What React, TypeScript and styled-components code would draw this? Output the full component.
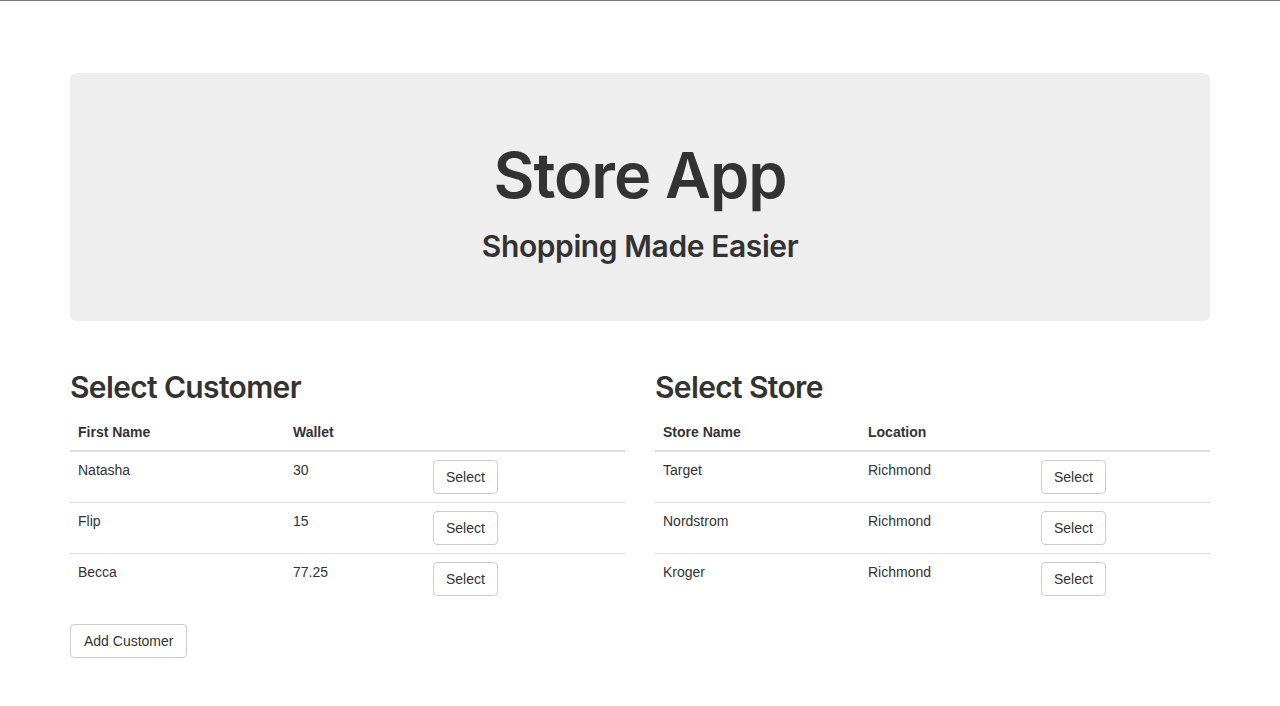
import React from "react";
import styled, { createGlobalStyle } from "styled-components";

const GlobalStyle = createGlobalStyle`
  * { box-sizing: border-box; }
  html, body { margin: 0; padding: 0; background: #fff; }
  body {
    border-top: 1px solid #777;
    font-family: "Liberation Sans", Helvetica, Arial, sans-serif;
    font-size: 14px;
    line-height: 1.42857143;
    color: #333;
  }
`;

const Container = styled.div`
  width: 1170px;
  margin: 0 auto;
  padding: 72px 15px 40px;
`;

const Jumbotron = styled.div`
  background: #eee;
  border-radius: 6px;
  padding: 48px 60px;
  margin-bottom: 30px;
  text-align: center;
`;

const headingFont = `"Inter", "Liberation Sans", Helvetica, Arial, sans-serif`;

const Title = styled.h1`
  font-family: ${headingFont};
  font-size: 63px;
  font-weight: 600;
  letter-spacing: -1px;
  line-height: 1.1;
  margin: 20px 0 10px;
  color: #333;
`;

const Subtitle = styled.h2`
  font-family: ${headingFont};
  font-size: 30px;
  font-weight: 600;
  letter-spacing: -0.4px;
  line-height: 1.1;
  margin: 20px 0 10px;
  color: #333;
`;

const Row = styled.div`
  display: grid;
  grid-template-columns: 1fr 1fr;
  column-gap: 30px;
`;

const Column = styled.div`
  min-width: 0;
`;

const SectionTitle = styled.h2`
  font-family: ${headingFont};
  font-size: 30px;
  font-weight: 600;
  letter-spacing: -0.65px;
  line-height: 1.1;
  margin: 20px 0 10px;
`;

const Table = styled.table`
  width: 100%;
  border-collapse: collapse;
  border-spacing: 0;
  margin-bottom: 20px;
  table-layout: fixed;
`;

const Th = styled.th<{ $w?: number }>`
  text-align: left;
  font-weight: bold;
  padding: 8px;
  line-height: 20px;
  vertical-align: bottom;
  border-bottom: 2px solid #ddd;
  width: ${(p) => (p.$w ? `${p.$w}px` : "auto")};
`;

const Td = styled.td`
  padding: 8px;
  line-height: 20px;
  vertical-align: top;
  border-top: 1px solid #ddd;
`;

const Button = styled.button<{ $wide?: boolean }>`
  display: inline-block;
  font-family: inherit;
  font-size: 14px;
  line-height: 20px;
  padding: 6px ${(p) => (p.$wide ? "13px" : "12px")};
  color: #333;
  background: #fff;
  border: 1px solid #ccc;
  border-radius: 4px;
  cursor: pointer;
  margin: 0;
`;

const customers = [
  { name: "Natasha", wallet: "30" },
  { name: "Flip", wallet: "15" },
  { name: "Becca", wallet: "77.25" },
];

const stores = [
  { name: "Target", location: "Richmond" },
  { name: "Nordstrom", location: "Richmond" },
  { name: "Kroger", location: "Richmond" },
];

export default function App() {
  return (
    <>
      <GlobalStyle />
      <Container>
        <Jumbotron>
          <Title>Store App</Title>
          <Subtitle>Shopping Made Easier</Subtitle>
        </Jumbotron>
        <Row>
          <Column>
            <SectionTitle>Select Customer</SectionTitle>
            <Table>
              <thead>
                <tr>
                  <Th $w={215}>First Name</Th>
                  <Th $w={140}>Wallet</Th>
                  <Th />
                </tr>
              </thead>
              <tbody>
                {customers.map((c) => (
                  <tr key={c.name}>
                    <Td>{c.name}</Td>
                    <Td>{c.wallet}</Td>
                    <Td>
                      <Button>Select</Button>
                    </Td>
                  </tr>
                ))}
              </tbody>
            </Table>
            <Button $wide>Add Customer</Button>
          </Column>
          <Column>
            <SectionTitle>Select Store</SectionTitle>
            <Table>
              <thead>
                <tr>
                  <Th $w={205}>Store Name</Th>
                  <Th $w={173}>Location</Th>
                  <Th />
                </tr>
              </thead>
              <tbody>
                {stores.map((s) => (
                  <tr key={s.name}>
                    <Td>{s.name}</Td>
                    <Td>{s.location}</Td>
                    <Td>
                      <Button>Select</Button>
                    </Td>
                  </tr>
                ))}
              </tbody>
            </Table>
          </Column>
        </Row>
      </Container>
    </>
  );
}
